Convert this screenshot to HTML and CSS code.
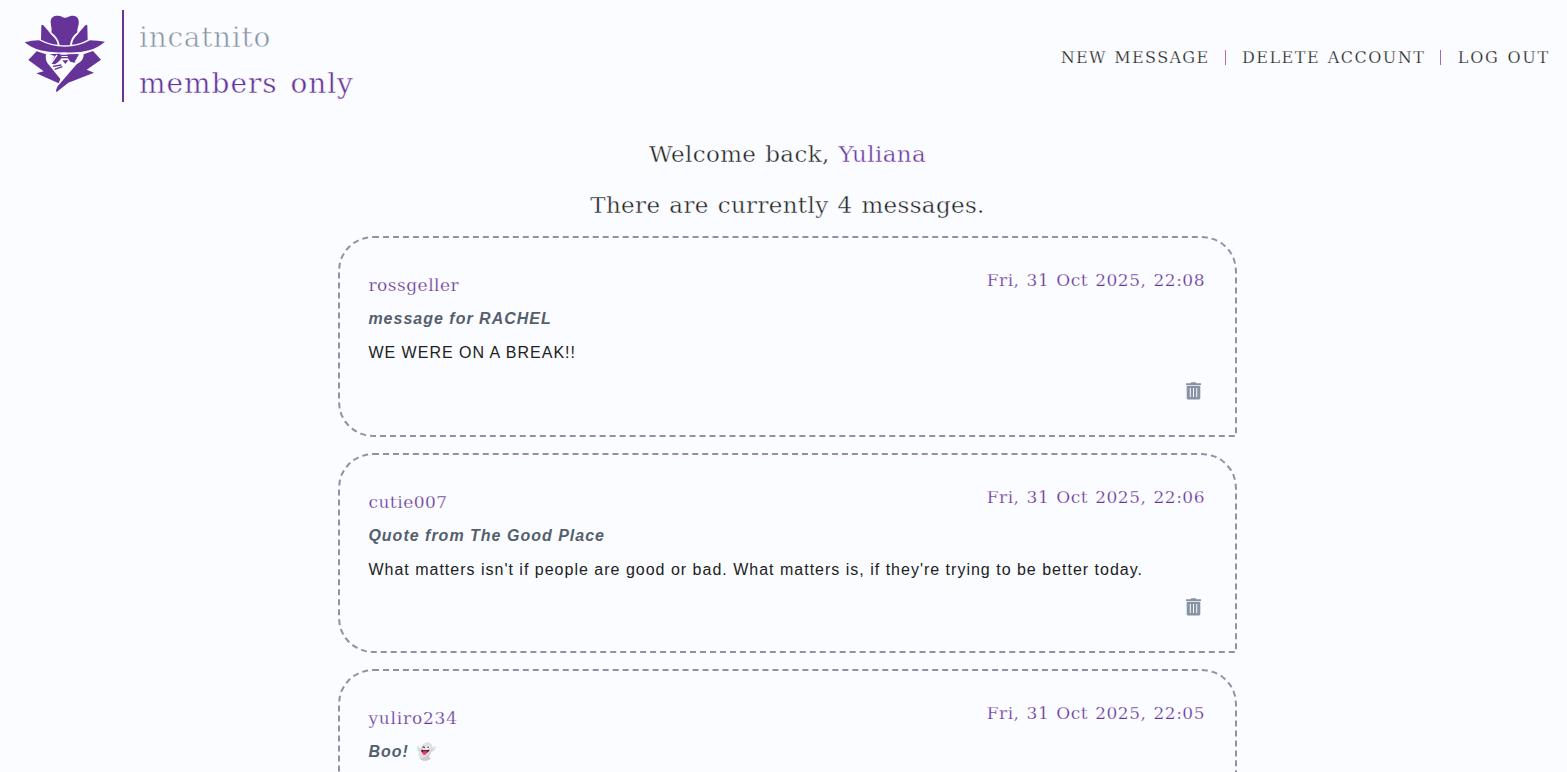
FILE: index.html
```html
<!DOCTYPE html>
<html lang="en">
<head>
<meta charset="utf-8">
<title>incatnito</title>
<link rel="stylesheet" href="styles.css">
</head>
<body>
<svg class="sprite" width="0" height="0"><symbol id="trash" viewBox="0 0 15 18"><path fill-rule="evenodd" d="M0 1.2H4.5L5.3.2H9.7L10.5 1.2H15V3H0ZM.7 3.7H14.3V16Q14.3 17.5 12.8 17.5H2.2Q.7 17.5 .7 16ZM3.8 6V15H4.8V6ZM7 6V15H8V6ZM10.2 6V15H11.2V6Z"/></symbol></svg>
<header class="header">
  <a class="brand">
    <svg class="logo" viewBox="27 27 246 240">
      <path d="M134 120C130 100 119 91 109 82C112 71 107 62 107 50C107 37 116 32 128 32C139 32 143 38 150 38C158 38 162 32 174 32C188 32 193 43 191 58C189 67 186 75 187 82C175 91 168 101 165 120Q149 122 134 120Z"/>
      <path d="M79 62Q80 57 85 61L102 80Q105 85 109 89Q126 103 128 119Q104 117 78 104ZM217 62Q216 57 211 61L194 80Q191 85 187 89Q172 103 171 119Q193 117 218 104Z"/>
      <path d="M29 112Q50 106 72 106Q107 125 149 125Q193 125 225 106Q249 107 270 110Q247 129 222 136Q189 145 148 142Q106 144 76 136Q48 128 29 112Z"/>
      <path d="M65 139L93 148Q89 168 102 180L136 222L131 235L64 205L86 199L40 165ZM234 138L258 164L215 194L237 203L160 233L125 261Q120 259 128 244L185 178Q207 167 206 148Z"/>
      <path d="M103 148L135 146L140 156Q137 168 120 178L107 176L119 153ZM157 148L192 147L182 174L166 170Q158 162 157 150Z"/>
      <path class="gap" d="M107 177L126 150M180 173L194 149"/>
      <path class="detail" d="M135 151H164M137 158H162M114 184L139 180M119 193L142 185"/>
      <path d="M142 166H160L151 177Z"/>
    </svg>
    <span class="brand-name"><span class="name-top">incatnito</span><span class="name-bottom">members only</span></span>
  </a>
  <nav class="nav"><a class="n1">NEW MESSAGE</a><i class="bar bar-pink"></i><a class="n2">DELETE ACCOUNT</a><i class="bar"></i><a class="n3">LOG OUT</a></nav>
</header>
<main class="main">
  <h1 class="line welcome">Welcome back, <span class="accent">Yuliana</span></h1>
  <h2 class="line count">There are currently 4 messages.</h2>
  <section class="list">
    <article class="card">
      <div class="top"><span class="user u1">rossgeller</span><time class="date">Fri, 31 Oct 2025, 22:08</time></div>
      <h3 class="title">message for RACHEL</h3>
      <p class="text">WE WERE ON A BREAK!!</p>
      <button class="delete" aria-label="Delete"><svg class="trash"><use href="#trash"/></svg></button>
    </article>
    <article class="card">
      <div class="top"><span class="user u2">cutie007</span><time class="date">Fri, 31 Oct 2025, 22:06</time></div>
      <h3 class="title">Quote from The Good Place</h3>
      <p class="text">What matters isn't if people are good or bad. What matters is, if they're trying to be better today.</p>
      <button class="delete" aria-label="Delete"><svg class="trash"><use href="#trash"/></svg></button>
    </article>
    <article class="card">
      <div class="top"><span class="user u3">yuliro234</span><time class="date">Fri, 31 Oct 2025, 22:05</time></div>
      <h3 class="title">Boo! 👻</h3>
    </article>
  </section>
</main>
</body>
</html>
```
FILE: styles.css
```css
* { box-sizing: border-box; margin: 0; padding: 0; }
html, body { height: 100%; overflow: hidden; }
body {
  background: #fafcff;
  color: #212121;
  font-family: "DejaVu Serif", serif;
  -webkit-text-stroke: 0.25px #fafcff;
}
.sprite { position: absolute; }
.header { display: flex; justify-content: space-between; height: 112px; padding: 10px 17px 10px 24px; }
.brand { display: flex; }
.logo { width: 82px; height: 80px; margin-top: 4px; fill: #663399; }
.detail { fill: none; stroke: #663399; stroke-width: 4; }
.gap { fill: none; stroke: #fafcff; stroke-width: 4; }
.brand-name {
  display: flex; flex-direction: column;
  height: 92px; margin-left: 16px; padding-left: 15px;
  border-left: 2px solid #663399;
  font-size: 28px; line-height: 46px; white-space: nowrap;
  -webkit-text-stroke-width: 0.6px;
}
.name-top { color: #8792a3; letter-spacing: 0.7px; padding-top: 5px; }
.name-bottom { color: #663399; letter-spacing: 0.95px; word-spacing: 3px; -webkit-text-stroke-width: 0.45px; }
.nav { display: flex; align-items: center; font-size: 16px; padding-top: 3px; white-space: nowrap; }
.n1 { letter-spacing: 1.35px; word-spacing: 1px; }
.n2 { letter-spacing: 1.5px; word-spacing: 1px; }
.n3 { letter-spacing: 1.75px; word-spacing: 1px; }
.bar { width: 1px; height: 15px; margin: 0 16.4px 0 15px; background: #9a6cc8; }
.bar-pink { background: #bd6cb0; }
.main { display: flex; flex-direction: column; align-items: center; padding-left: 8px; }
.line { font-size: 23px; font-weight: 400; line-height: 51px; white-space: nowrap; letter-spacing: 0.35px; word-spacing: 1.3px; -webkit-text-stroke-width: 0.4px; }
.welcome { margin-top: 17px; }
.accent { color: #663399; }
.count { margin-bottom: 5px; }
.list { display: flex; flex-direction: column; gap: 16px; width: 899px; height: 536px; overflow: hidden; }
.card {
  height: 200.5px; padding: 27px 30px 0 28.4px; flex: none;
  border: 2px dashed #8d93a6; border-radius: 35px 35px 0 35px;
}
.top { display: flex; justify-content: space-between; height: 39px; color: #663399; font-size: 17px; }
.user { line-height: 40px; letter-spacing: 0.5px; }
.u3 { letter-spacing: 0.8px; }
.date { line-height: 30px; letter-spacing: 0.5px; word-spacing: 1.2px; }
.title, .text { font-family: "Liberation Sans", Arial, sans-serif; font-size: 16px; letter-spacing: 1px; -webkit-text-stroke-width: 0; }
.title { color: #555f6d; font-style: italic; line-height: 30px; }
.text { line-height: 38px; }
.delete { display: block; margin: 9.6px 4px 0 auto; border: 0; background: none; }
.trash { display: block; width: 15px; height: 18px; fill: #8792a3; }
```
